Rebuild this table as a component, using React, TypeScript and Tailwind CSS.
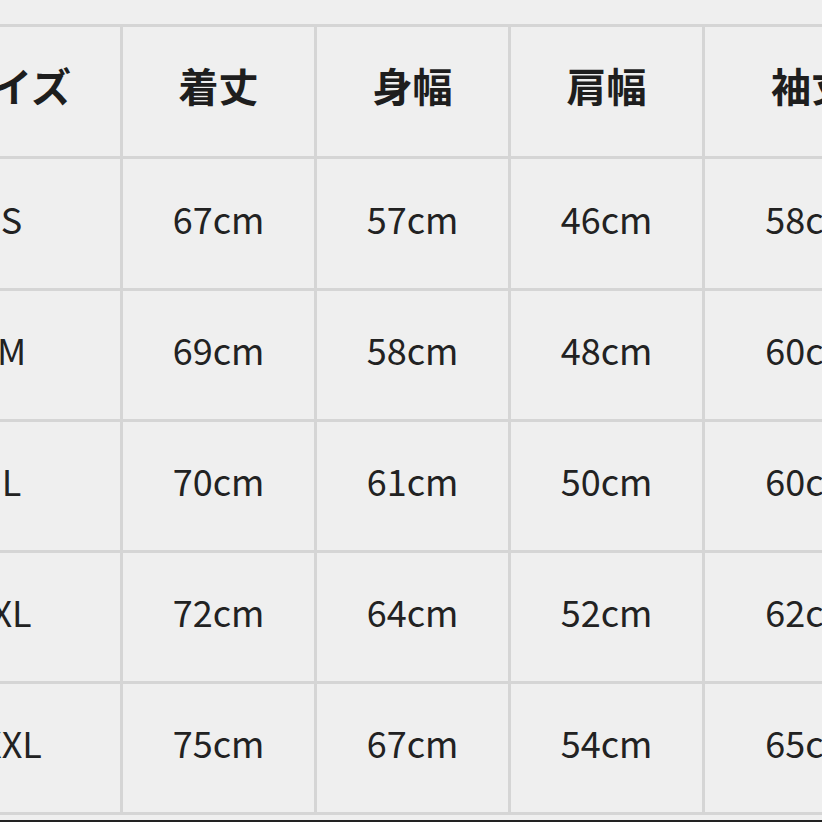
import React from "react";

const headers = ["サイズ", "着丈", "身幅", "肩幅", "袖丈"];
const rows = [
  ["S", "67cm", "57cm", "46cm", "58cm"],
  ["M", "69cm", "58cm", "48cm", "60cm"],
  ["L", "70cm", "61cm", "50cm", "60cm"],
  ["XL", "72cm", "64cm", "52cm", "62cm"],
  ["XXL", "75cm", "67cm", "54cm", "65cm"],
];

export default function App() {
  return (
    <div
      className="relative w-[822px] h-[822px] overflow-hidden bg-[#efefef]"
      style={{ fontFamily: '"Noto Sans CJK JP", "Noto Sans", sans-serif' }}
    >
      <div className="pt-[24px]">
        <div className="ml-[-100px] w-max bg-[#d5d5d5] p-[3px] grid grid-cols-[217px_191px_191px_191px_212px] grid-rows-[129px_129px_128px_128px_128px_128px] gap-[3px]">
          {headers.map((h) => (
            <div
              key={h}
              className="bg-[#efefef] flex items-center justify-center pb-[14px] text-[40px] font-bold text-[#1e1e1e] leading-none"
            >
              {h}
            </div>
          ))}
          {rows.map((r) =>
            r.map((c, i) => (
              <div
                key={r[0] + i}
                className="bg-[#efefef] flex items-center justify-center pb-[12px] text-[36px] text-[#222222] leading-none"
              >
                {c}
              </div>
            ))
          )}
        </div>
      </div>
      <div className="absolute left-0 right-0 bottom-0 h-[2px] bg-[#222222]" />
    </div>
  );
}
